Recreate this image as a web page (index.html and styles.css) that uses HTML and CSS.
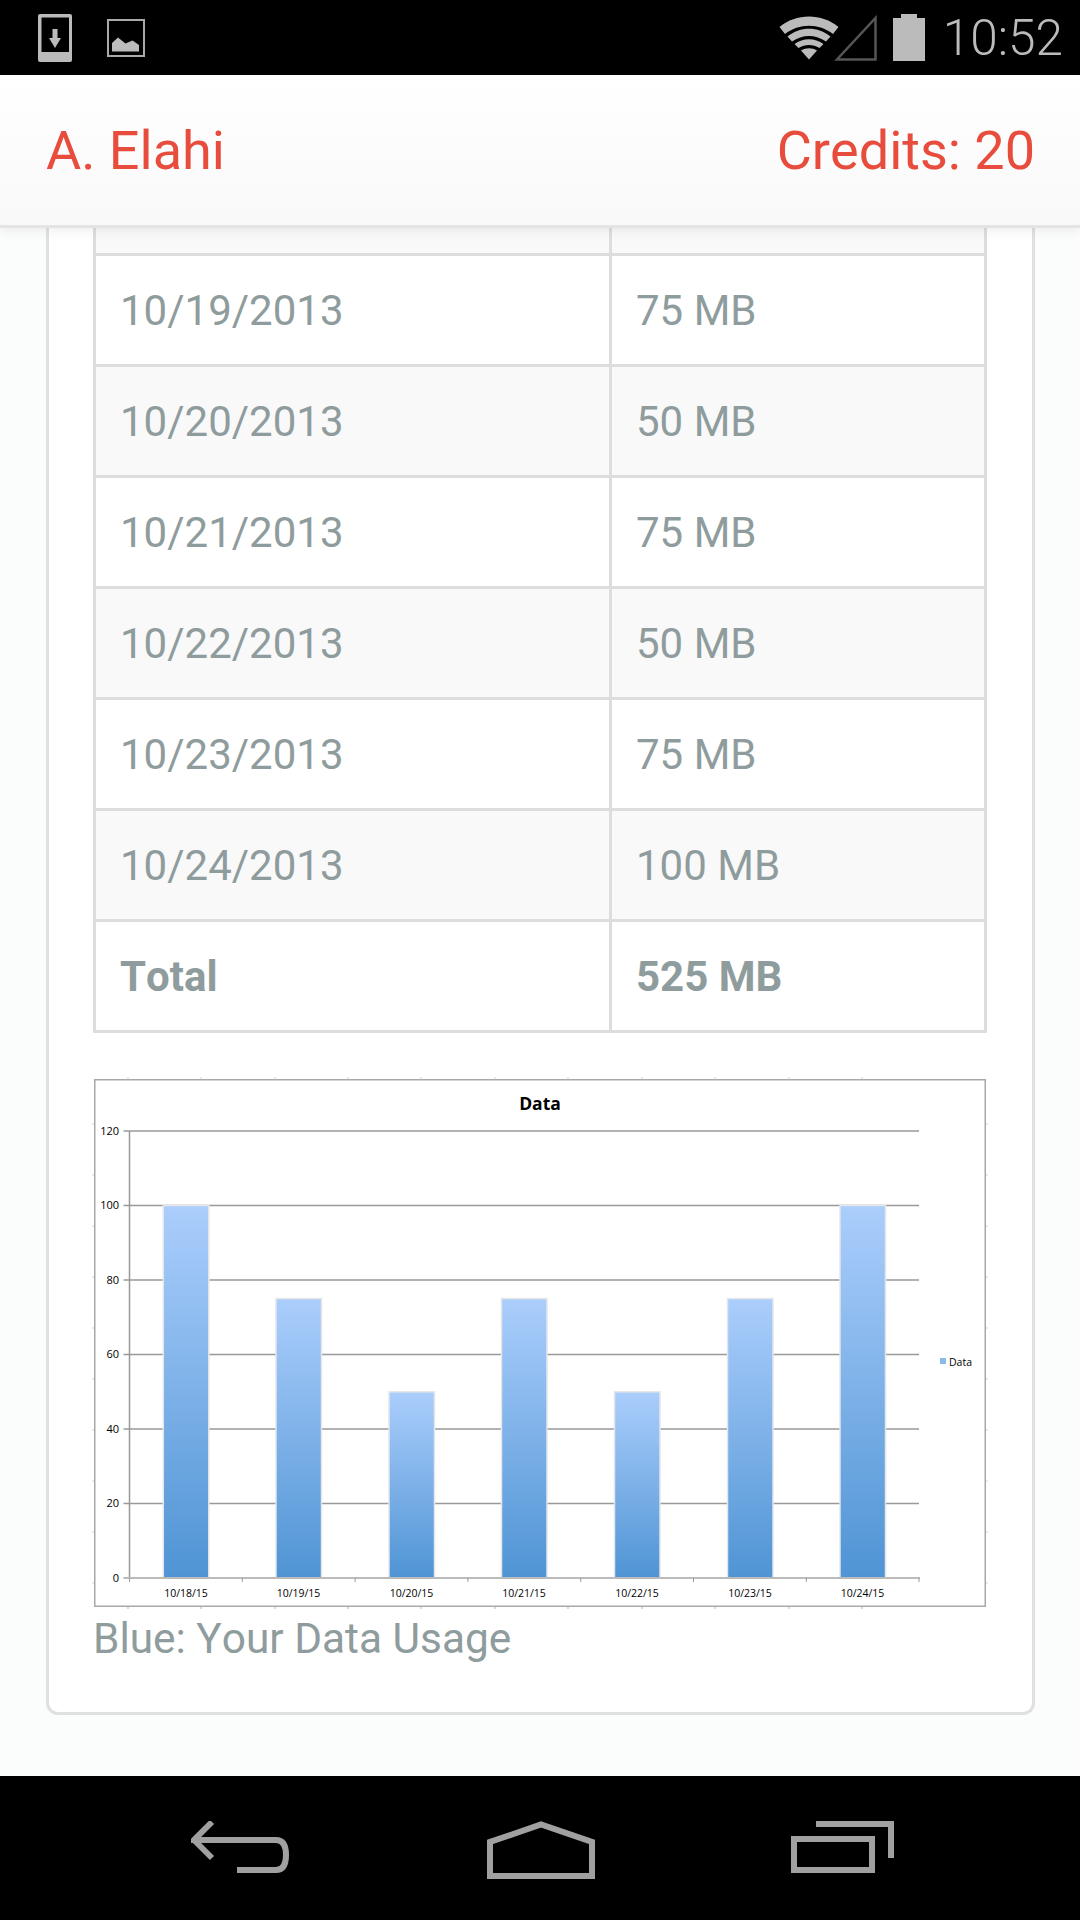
FILE: index.html
```html
<!DOCTYPE html>
<html lang="en">
<head>
    <meta charset="UTF-8">
    <meta name="viewport" content="width=device-width, initial-scale=1.0">
    <title>Data Usage</title>
    <link rel="stylesheet" href="styles.css">
</head>
<body>
    <div class="status-bar">
        <div class="status-left">
            <svg class="icon-download" width="36" height="50" viewBox="0 0 36 50">
                <path fill-rule="evenodd" fill="#bbb" d="M3 1h30a2 2 0 0 1 2 2v44a2 2 0 0 1-2 2H3a2 2 0 0 1-2-2V3a2 2 0 0 1 2-2zM4.500 4.500v34.500h27.500V4.500z"/>
                <path fill="#bbb" d="M15.500 16h5v9h3.500l-6 10-6-10h3.500z"/>
            </svg>
            <svg class="icon-picture" width="38" height="38" viewBox="0 0 38 38">
                <rect x="1" y="1" width="36" height="36" fill="none" stroke="#aaa" stroke-width="2"/>
                <path fill="#bbb" d="M5 32.500V24l6-5.500 7.500 6 7-3 6.500 4.500v6.500z"/>
            </svg>
        </div>
        <div class="status-right">
            <svg class="icon-wifi" width="60" height="44" viewBox="0 0 60 44">
                <path fill="#bbb" d="M0.500 11C17 -3 43 -3 59.500 11L54 18C40 7 20 7 6 18z"/>
                <path fill="#bbb" d="M8.500 20.500C21 10 39 10 51.500 20.500L47 25.500C37 18 23 18 13 25.500z"/>
                <path fill="#bbb" d="M15.500 28C24 21.500 36 21.500 44.500 28L40.500 32C34 28 26 28 19.500 32z"/>
                <path fill="#bbb" d="M22 34.500C27 31.500 33 31.500 38 34.500L30 43.500z"/>
            </svg>
            <svg class="icon-signal" width="44" height="46" viewBox="0 0 44 46">
                <path d="M42.500 3V44.500H4z" fill="none" stroke="#555" stroke-width="2.500"/>
            </svg>
            <svg class="icon-battery" width="32" height="47" viewBox="0 0 32 47">
                <path fill="#bbb" d="M8 0h16v4h8v43H0V4h8z"/>
            </svg>
            <span class="clock">10:52</span>
        </div>
    </div>

    <header class="app-header">
        <span>A. Elahi</span>
        <span>Credits: 20</span>
    </header>

    <main class="content">
        <section class="card">
            <table class="usage-table">
                <tr class="cut-row"><td></td><td></td></tr>
                <tr><td>10/19/2013</td><td>75 MB</td></tr>
                <tr><td>10/20/2013</td><td>50 MB</td></tr>
                <tr><td>10/21/2013</td><td>75 MB</td></tr>
                <tr><td>10/22/2013</td><td>50 MB</td></tr>
                <tr><td>10/23/2013</td><td>75 MB</td></tr>
                <tr><td>10/24/2013</td><td>100 MB</td></tr>
                <tr class="total-row"><td>Total</td><td>525 MB</td></tr>
            </table>

            <svg class="chart" width="892" height="528" viewBox="0 0 892 528">
                <defs>
                    <linearGradient id="barFill" x1="0" y1="0" x2="0" y2="1">
                        <stop offset="0" stop-color="#abcefc"/>
                        <stop offset="1" stop-color="#4f94d4"/>
                    </linearGradient>
                </defs>
                <rect x="0.750" y="0.750" width="890.500" height="526.500" fill="#fff" stroke="#a8a8a8" stroke-width="1.500"/>
                <path stroke="#d4d4d4" stroke-width="1" d="M34 0v-2M107 0v-2M181 0v-2M254 0v-2M327 0v-2M401 0v-2M474 0v-2M548 0v-2M621 0v-2M695 0v-2M768 0v-2"/>
                <path stroke="#ccc" stroke-width="1.500" d="M34 528v2M107 528v2M181 528v2M254 528v2M327 528v2M401 528v2M474 528v2M548 528v2M621 528v2M695 528v2M768 528v2"/>
                <path stroke="#d4d4d4" stroke-width="1" d="M0 45h-2M0 96h-2M0 147h-2M0 198h-2M0 249h-2M0 300h-2M0 351h-2M0 402h-2M0 453h-2M0 504h-2M892 45h2M892 96h2M892 147h2M892 198h2M892 249h2M892 300h2M892 351h2M892 402h2M892 453h2M892 504h2"/>

                <g stroke="#999" stroke-width="1.500">
                    <path d="M29.500 52H825M29.500 126.500H825M29.500 201H825M29.500 275.500H825M29.500 350H825M29.500 424.500H825"/>
                    <path d="M35.500 52V499"/>
                </g>

                <g fill="url(#barFill)" stroke="#e4e6ea" stroke-width="1.500">
                    <rect x="69.300" y="126.500" width="45.500" height="372.500"/>
                    <rect x="182" y="219.600" width="45.500" height="279.400"/>
                    <rect x="295" y="312.800" width="45.500" height="186.200"/>
                    <rect x="407.500" y="219.600" width="45.500" height="279.400"/>
                    <rect x="520.500" y="312.800" width="45.500" height="186.200"/>
                    <rect x="633.500" y="219.600" width="45.500" height="279.400"/>
                    <rect x="746" y="126.500" width="45.500" height="372.500"/>
                </g>

                <path stroke="#bbb" stroke-width="2" d="M29.500 499H826"/>
                <path stroke="#999" stroke-width="1" d="M35.500 499v4M148.300 499v4M261.100 499v4M373.900 499v4M486.700 499v4M599.500 499v4M712.300 499v4M825 499v4"/>

                <text class="chart-title" x="446" y="31">Data</text>

                <g class="y-label">
                    <text x="25" y="56">120</text>
                    <text x="25" y="130">100</text>
                    <text x="25" y="205">80</text>
                    <text x="25" y="279">60</text>
                    <text x="25" y="354">40</text>
                    <text x="25" y="428">20</text>
                    <text x="25" y="503">0</text>
                </g>

                <g class="x-label">
                    <text x="92" y="518">10/18/15</text>
                    <text x="204.500" y="518">10/19/15</text>
                    <text x="317.500" y="518">10/20/15</text>
                    <text x="430" y="518">10/21/15</text>
                    <text x="543" y="518">10/22/15</text>
                    <text x="656" y="518">10/23/15</text>
                    <text x="768.500" y="518">10/24/15</text>
                </g>

                <rect x="846" y="279" width="6" height="6" fill="#8db8ec"/>
                <text class="legend-label" x="855" y="287">Data</text>
            </svg>
            <p class="caption">Blue: Your Data Usage</p>
        </section>
    </main>

    <nav class="nav-bar">
        <svg width="100" height="52" viewBox="0 0 100 52">
            <path d="M21 1L3 19h82q10 0 10 15t-10 15H46M3 19l18 18" fill="none" stroke="#a0a0a0" stroke-width="6"/>
        </svg>
        <svg width="108" height="58" viewBox="0 0 108 58">
            <path d="M3 55V21L54 3.500 105 21V55z" fill="none" stroke="#a0a0a0" stroke-width="6"/>
        </svg>
        <svg width="104" height="52" viewBox="0 0 104 52">
            <rect x="3" y="18" width="78" height="31" fill="none" stroke="#a0a0a0" stroke-width="6"/>
            <path d="M25 3H100V37" fill="none" stroke="#a0a0a0" stroke-width="6"/>
        </svg>
    </nav>
</body>
</html>
```

FILE: styles.css
```css
* {
    box-sizing: border-box;
}

html, body {
    margin: 0;
    height: 100%;
}

body {
    display: flex;
    flex-direction: column;
    height: 1920px;
    overflow: hidden;
    font-family: Roboto, sans-serif;
    font-kerning: none;
    background: #fbfcfc;
}

.status-bar {
    display: flex;
    justify-content: space-between;
    align-items: center;
    height: 75px;
    padding: 0 17px 0 37px;
    background: #000;
}

.status-left {
    display: flex;
    align-items: center;
    gap: 34px;
}

.status-right {
    display: flex;
    align-items: center;
}

.icon-signal {
    margin-left: -6px;
}

.icon-battery {
    margin-left: 16px;
}

.clock {
    margin-left: 18px;
    color: #bbb;
    font-size: 49.500px;
    font-weight: 300;
}

.app-header {
    position: relative;
    z-index: 2;
    display: flex;
    justify-content: space-between;
    align-items: center;
    height: 153px;
    padding: 0 45px 0 46px;
    border-bottom: 3px solid #e4e4e4;
    background: linear-gradient(#fff, #f9f9f9);
    box-shadow: 0 4px 10px rgba(0, 0, 0, 0.06);
    color: #e74c3c;
    font-size: 54px;
}

.content {
    flex: 1;
    padding: 0 45px 0 46px;
}

.card {
    padding: 0 47px 42px 46px;
    border: 3px solid #e0e0e0;
    border-top: none;
    border-radius: 0 0 12px 12px;
    background: #fff;
}

.usage-table {
    width: 894px;
    margin-left: -2px;
    border-collapse: collapse;
    table-layout: fixed;
    color: #8f9c9d;
    font-size: 42px;
}

.usage-table td {
    height: 111px;
    padding: 2px 24px 0;
    border: 3px solid #ddd;
}

.usage-table td:first-child {
    width: 516px;
}

.usage-table tr:nth-child(odd) td {
    background: #f9f9f9;
}

.usage-table .cut-row td {
    height: 26px;
    border-top: none;
}

.usage-table .total-row td {
    background: #fff;
    font-weight: 700;
}

.chart {
    display: block;
    margin: 46px 0 0 -1px;
    overflow: visible;
    font-family: "Open Sans", sans-serif;
}

.chart-title {
    font-size: 17.500px;
    font-weight: 700;
    text-anchor: middle;
}

.y-label {
    font-size: 11px;
    text-anchor: end;
}

.x-label {
    font-size: 10.500px;
    text-anchor: middle;
}

.legend-label {
    font-size: 10.500px;
}

.caption {
    margin: 0 0 0 -2px;
    color: #8f9c9d;
    font-size: 42.400px;
    line-height: 63px;
}

.nav-bar {
    display: flex;
    justify-content: space-between;
    align-items: flex-start;
    height: 144px;
    padding: 45px 185px 0 191px;
    background: #000;
}
```
